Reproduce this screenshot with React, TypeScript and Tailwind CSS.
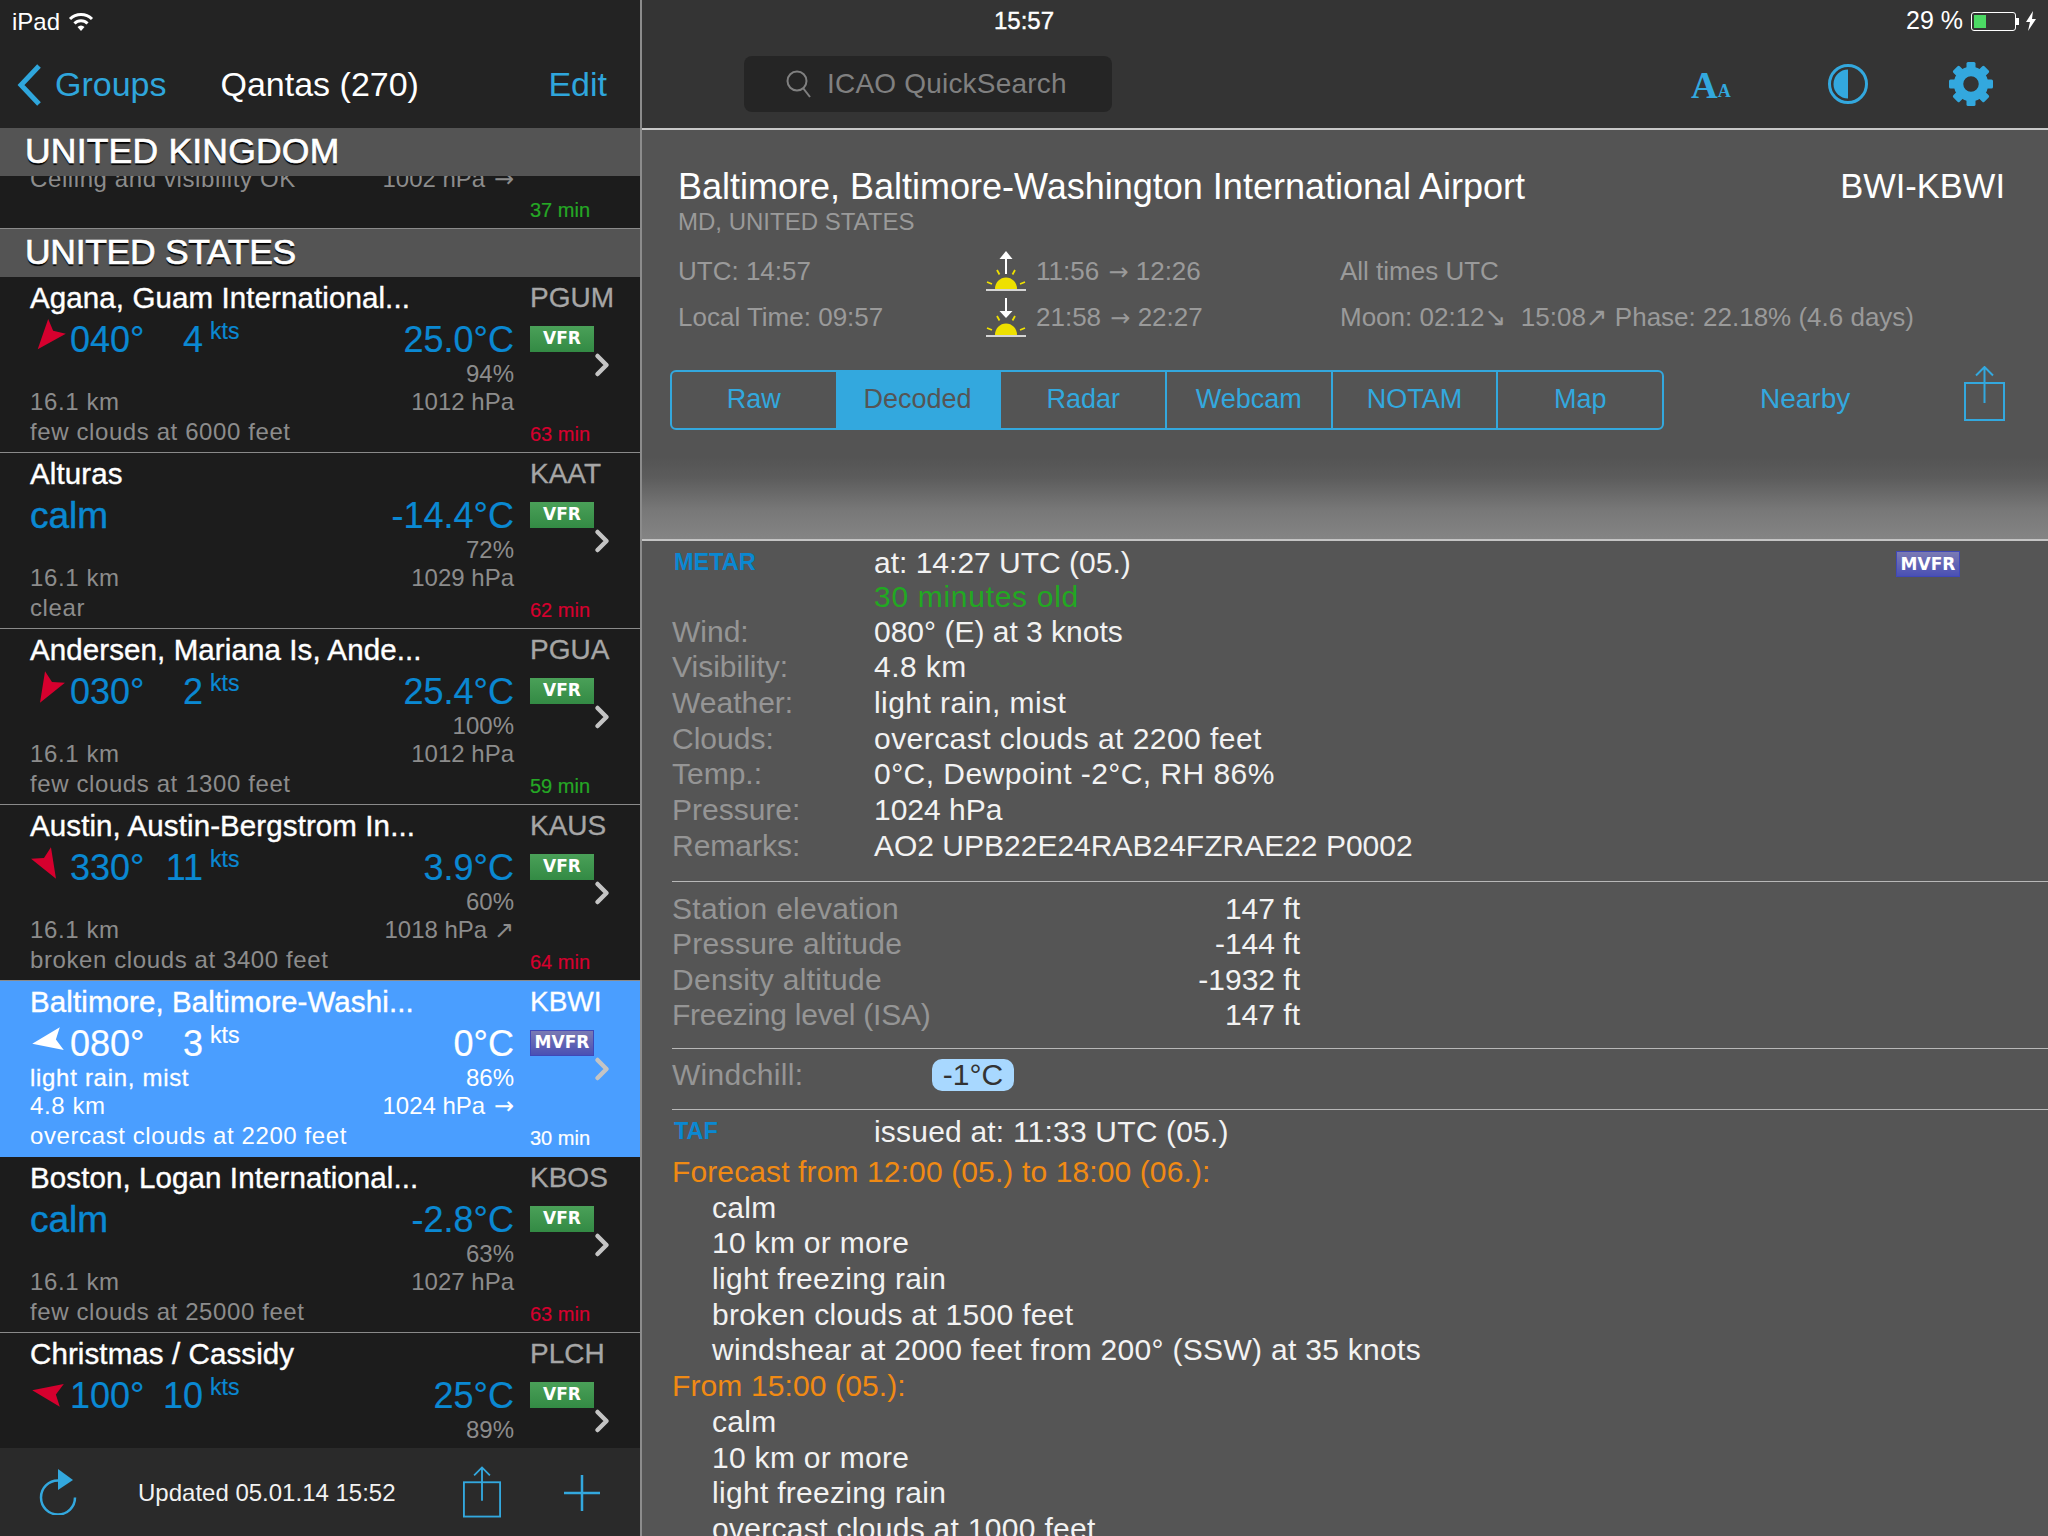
import type { ReactNode } from "react";
import { ChevronRight } from "lucide-react";

type Station = {
  name: string;
  code: string;
  dir?: number;
  speed?: string;
  temp: string;
  rh: string;
  weather?: string;
  vis: string;
  hpa: string;
  clouds: string;
  age: string;
  fresh?: boolean;
  flight?: string;
  selected?: boolean;
};

const stations: Station[] = [
  { name: "Agana, Guam International...", code: "PGUM", dir: 40, speed: "4", temp: "25.0°C", rh: "94%", vis: "16.1 km", hpa: "1012 hPa", clouds: "few clouds at 6000 feet", age: "63 min" },
  { name: "Alturas", code: "KAAT", temp: "-14.4°C", rh: "72%", vis: "16.1 km", hpa: "1029 hPa", clouds: "clear", age: "62 min" },
  { name: "Andersen, Mariana Is, Ande...", code: "PGUA", dir: 30, speed: "2", temp: "25.4°C", rh: "100%", vis: "16.1 km", hpa: "1012 hPa", clouds: "few clouds at 1300 feet", age: "59 min", fresh: true },
  { name: "Austin, Austin-Bergstrom In...", code: "KAUS", dir: 330, speed: "11", temp: "3.9°C", rh: "60%", vis: "16.1 km", hpa: "1018 hPa ↗", clouds: "broken clouds at 3400 feet", age: "64 min" },
  { name: "Baltimore, Baltimore-Washi...", code: "KBWI", dir: 80, speed: "3", temp: "0°C", rh: "86%", weather: "light rain, mist", vis: "4.8 km", hpa: "1024 hPa →", clouds: "overcast clouds at 2200 feet", age: "30 min", flight: "MVFR", selected: true },
  { name: "Boston, Logan International...", code: "KBOS", temp: "-2.8°C", rh: "63%", vis: "16.1 km", hpa: "1027 hPa", clouds: "few clouds at 25000 feet", age: "63 min" },
  { name: "Christmas / Cassidy", code: "PLCH", dir: 100, speed: "10", temp: "25°C", rh: "89%", vis: "", hpa: "", clouds: "", age: "" },
];

function Arrow() {
  return <span className="ml-[2px] font-['DejaVu_Sans',sans-serif] text-[24px]">→</span>;
}

function WindArrow({ dir, color }: { dir: number; color: string }) {
  return (
    <svg width="40" height="40" viewBox="-20 -20 40 40" className="shrink-0 -translate-x-[2px] -translate-y-[3px]">
      <polygon points="0,16 -11.5,-14 0,-8 11.5,-14" fill={color} transform={`rotate(${dir})`} />
    </svg>
  );
}

function FlightBadge({ kind = "VFR" }: { kind?: string }) {
  const mvfr = kind === "MVFR";
  return (
    <div
      className={`flex h-[26px] w-[64px] items-center justify-center font-['DejaVu_Sans',sans-serif] text-[17px] font-bold text-white ${
        mvfr
          ? "border border-[#3f48b8] bg-[linear-gradient(to_bottom,#7a7ab4,#4a50b4)]"
          : "bg-[linear-gradient(to_bottom,#4aa058,#338a44)]"
      }`}
    >
      {kind}
    </div>
  );
}

function ShareIcon({ className }: { className: string }) {
  return (
    <svg viewBox="0 0 41 55" fill="none" stroke="#33a8de" strokeWidth="2" className={className}>
      <rect x="1" y="17" width="39" height="37" />
      <path d="M20.5 1v36M12 9.5 20.5 1 29 9.5" />
    </svg>
  );
}

function SunIcon({ down }: { down?: boolean }) {
  return (
    <svg width="40" height="40" viewBox="0 0 40 40" className="shrink-0">
      <path d="M9 38a11 11.5 0 0 1 22 0z" fill="#eee000" />
      <path d="M0 39h40" stroke="#fff" strokeWidth="1.6" />
      <path d="M1 31l5 2M39 31l-5 2M11 19l2.500 4.500M29 19l-2.500 4.500" stroke="#eee000" strokeWidth="1.800" fill="none" />
      {down ? (
        <>
          <path d="M20 1v14" stroke="#fff" strokeWidth="2" />
          <path d="M13.500 14h13L20 21z" fill="#fff" />
        </>
      ) : (
        <>
          <path d="M20 7v16" stroke="#fff" strokeWidth="2" />
          <path d="M13.500 8h13L20 0z" fill="#fff" />
        </>
      )}
    </svg>
  );
}

function GearIcon() {
  const teeth = [0, 45, 90, 135, 180, 225, 270, 315];
  return (
    <svg width="44" height="44" viewBox="-22 -22 44 44">
      <circle r="12.500" fill="none" stroke="#33a8de" strokeWidth="9.500" />
      {teeth.map((a) => (
        <rect key={a} x="-4.500" y="-22" width="9" height="8" rx="1.500" fill="#33a8de" transform={`rotate(${a})`} />
      ))}
    </svg>
  );
}

function StationRow({ s }: { s: Station }) {
  const sel = s.selected;
  const sub = sel ? "text-white" : "text-[#8c8c8c]";
  const data = sel ? "text-white" : "text-[#0a88d2]";
  const ageColor = sel ? "text-white" : s.fresh ? "text-[#25a825]" : "text-[#d6002e]";
  const hasArrow = s.hpa.endsWith("→");
  return (
    <div className={`flex h-[176px] shrink-0 border-b pl-[30px] ${sel ? "border-transparent bg-[#4a9eff]" : "border-[#8a8a8a] bg-[#1c1c1c]"}`}>
      <div className="flex w-[484px] shrink-0 flex-col">
        <div className="flex h-[43px] items-center text-[29.5px] tracking-[0.1px] text-white [-webkit-text-stroke:0.4px_white]">{s.name}</div>
        <div className={`flex h-[40px] items-center text-[36px] [-webkit-text-stroke:0.2px_currentColor] ${data}`}>
          {s.dir !== undefined ? (
            <>
              <WindArrow dir={s.dir} color={sel ? "#ffffff" : "#d6002e"} />
              <span className="w-[74px]">{String(s.dir).padStart(3, "0")}°</span>
              <span className="w-[59px] text-right">{s.speed}</span>
              <span className="ml-[7px] -translate-y-[9px] text-[23px] leading-none">kts</span>
            </>
          ) : (
            <span className="text-[37px] [-webkit-text-stroke:0.5px_currentColor]">calm</span>
          )}
          <span className="ml-auto">{s.temp}</span>
        </div>
        <div className={`flex h-[27px] items-center justify-between text-[24px] ${sub}`}>
          <span className="tracking-[0.7px] text-white [-webkit-text-stroke:0.3px_white]">{s.weather}</span>
          <span>{s.rh}</span>
        </div>
        <div className={`flex h-[30px] items-center justify-between text-[24px] ${sub}`}>
          <span className="tracking-[0.6px]">{s.vis}</span>
          <span>
            {hasArrow ? s.hpa.slice(0, -1) : s.hpa}
            {hasArrow && <Arrow />}
          </span>
        </div>
        <div className={`flex h-[30px] items-center text-[24px] tracking-[0.6px] ${sub}`}>{s.clouds}</div>
      </div>
      <div className="ml-[16px] flex flex-1 flex-col">
        <div className={`flex h-[42px] items-center text-[28px] [-webkit-text-stroke:0.3px_currentColor] ${sel ? "text-white" : "text-[#a6a6a6]"}`}>{s.code}</div>
        <div className="mt-[7px]">
          <FlightBadge kind={s.flight} />
        </div>
        <ChevronRight size={36} strokeWidth={3} className="ml-[54px] mt-[-5px] text-[#c4c4c4]" />
        <div className={`mt-auto flex h-[36px] items-center text-[20px] [-webkit-text-stroke:0.2px_currentColor] ${ageColor}`}>{s.age}</div>
      </div>
    </div>
  );
}

function SectionHeader({ children, className }: { children: ReactNode; className: string }) {
  return (
    <div className={`flex h-[48px] shrink-0 items-center bg-[#545454] pl-[25px] text-[35.5px] text-white [-webkit-text-stroke:0.7px_white] [text-shadow:0_2px_1px_#000] ${className}`}>
      {children}
    </div>
  );
}

function InfoRow({ left, down, times, right }: { left: string; down?: boolean; times: [string, string]; right: string }) {
  return (
    <div className="flex h-[46px] items-center text-[26px] text-[#9a9a9a]">
      <span className="w-[308px]">{left}</span>
      <SunIcon down={down} />
      <span className="ml-[10px] w-[304px] whitespace-pre">
        {times[0]} <Arrow /> {times[1]}
      </span>
      <span className="whitespace-pre">{right}</span>
    </div>
  );
}

function MetarRow({ label, value, wide, first }: { label: string; value: string; wide?: boolean; first?: boolean }) {
  return (
    <div className={`flex items-center ${first ? "h-[34.500px]" : "h-[35.800px]"}`}>
      <span className="w-[202px] text-[#959595]">{label}</span>
      <span className={wide ? "tracking-[0.45px]" : ""}>{value}</span>
    </div>
  );
}

function AltRow({ label, value, tight }: { label: string; value: string; tight?: boolean }) {
  return (
    <div className="flex h-[35.600px] w-[628px] items-center justify-between">
      <span className={`text-[#959595] ${tight ? "tracking-[-0.25px]" : "tracking-[0.3px]"}`}>{label}</span>
      <span>{value}</span>
    </div>
  );
}

export default function App() {
  const tabs = ["Raw", "Decoded", "Radar", "Webcam", "NOTAM", "Map"];
  const alts = [
    ["Station elevation", "147 ft"],
    ["Pressure altitude", "-144 ft"],
    ["Density altitude", "-1932 ft"],
    ["Freezing level (ISA)", "147 ft"],
  ];
  const taf: [string, boolean][] = [
    ["Forecast from 12:00 (05.) to 18:00 (06.):", true],
    ["calm", false],
    ["10 km or more", false],
    ["light freezing rain", false],
    ["broken clouds at 1500 feet", false],
    ["windshear at 2000 feet from 200° (SSW) at 35 knots", false],
    ["From 15:00 (05.):", true],
    ["calm", false],
    ["10 km or more", false],
    ["light freezing rain", false],
    ["overcast clouds at 1000 feet", false],
  ];

  return (
    <div className="flex h-[1536px] w-[2048px] overflow-hidden bg-[#555555] font-['Liberation_Sans','DejaVu_Sans',sans-serif]">
      {/* station list */}
      <div className="flex h-full w-[640px] shrink-0 flex-col bg-[#1c1c1c]">
        <div className="h-[128px] shrink-0 bg-[#232323]">
          <div className="flex h-[43px] items-center pl-[12px] text-[24px] text-white">
            iPad
            <svg width="26" height="22" viewBox="0 0 26 22" className="ml-[8px]" fill="none" stroke="#fff" strokeWidth="3">
              <path d="M2 8a15.500 15.500 0 0 1 22 0M6.500 12.500a9 9 0 0 1 13 0" />
              <path d="M9.500 16a4.800 4.800 0 0 1 7 0L13 20z" fill="#fff" stroke="none" />
            </svg>
          </div>
          <div className="flex h-[85px] items-center pb-[2px] text-[34px]">
            <svg width="26" height="44" viewBox="0 0 26 44" fill="none" stroke="#2fa6dc" strokeWidth="5" className="ml-[16px]">
              <path d="M23 3 5 22l18 19" />
            </svg>
            <span className="ml-[13px] text-[#2fa6dc]">Groups</span>
            <span className="ml-[54px] text-white">Qantas (270)</span>
            <span className="ml-auto mr-[33px] text-[#2fa6dc]">Edit</span>
          </div>
        </div>
        <div className="flex min-h-0 flex-1 flex-col overflow-hidden">
          <SectionHeader className="tracking-[0.2px]">UNITED KINGDOM</SectionHeader>
          <div className="flex h-[53px] shrink-0 overflow-hidden border-b border-[#8a8a8a] pl-[30px]">
            <div className="-mt-[12px] flex h-[30px] w-[484px] shrink-0 items-center justify-between text-[24px] text-[#8c8c8c]">
              <span className="tracking-[0.6px]">Ceiling and visibility OK</span>
              <span>
                1002 hPa <Arrow />
              </span>
            </div>
            <div className="ml-[16px] pt-[24px] text-[20px] leading-[20px] text-[#25a825] [-webkit-text-stroke:0.2px_currentColor]">37 min</div>
          </div>
          <SectionHeader className="tracking-[-0.3px]">UNITED STATES</SectionHeader>
          {stations.map((s) => (
            <StationRow key={s.code} s={s} />
          ))}
        </div>
        <div className="flex h-[88px] shrink-0 items-center bg-[#2a2a2a]">
          <svg width="38" height="46" viewBox="0 0 38 46" fill="none" className="ml-[39px]">
            <path d="M19 11.500a17 17 0 1 0 17 17" stroke="#33a8de" strokeWidth="2.500" />
            <path d="M19 0l15 11-15 10z" fill="#33a8de" />
          </svg>
          <span className="ml-[61px] pt-[2px] text-[24px] text-[#f2f2f2]">Updated 05.01.14 15:52</span>
          <ShareIcon className="ml-[67px] h-[52px] w-[38px]" />
          <svg width="36" height="36" viewBox="0 0 36 36" stroke="#33a8de" strokeWidth="2.500" className="ml-[63px] mt-[2px]">
            <path d="M0 18h36M18 0v36" />
          </svg>
        </div>
      </div>
      <div className="h-full w-[2px] shrink-0 bg-[#8c8c8c]" />

      {/* station detail */}
      <div className="flex h-full min-w-0 flex-1 flex-col">
        <div className="h-[130px] shrink-0 border-b-2 border-[#c8c8c8] bg-[#343434]">
          <div className="flex h-[42px] items-center text-white">
            <span className="ml-[352px] text-[24px] [-webkit-text-stroke:0.4px_white]">15:57</span>
            <span className="ml-auto text-[25px]">29 %</span>
            <div className="ml-[8px] flex items-center">
              <div className="h-[19px] w-[45px] rounded-[3px] border border-white p-[2px]">
                <div className="h-full w-[12px] bg-[#4cd964]" />
              </div>
              <div className="h-[7px] w-[3px] bg-white" />
            </div>
            <svg width="12" height="20" viewBox="0 0 12 20" className="ml-[6px] mr-[11px]" fill="#fff">
              <path d="M8 0 1 11h4l-2 9 8-12H7z" />
            </svg>
          </div>
          <div className="flex h-[86px] items-start">
            <div className="ml-[102px] mt-[14px] flex h-[56px] w-[368px] items-center rounded-[8px] bg-[#252525] text-[28px] tracking-[0.2px] text-[#808080]">
              <svg width="26" height="28" viewBox="0 0 26 28" fill="none" stroke="#808080" strokeWidth="2" className="ml-[42px]">
                <circle cx="11" cy="11" r="9.500" />
                <path d="M17 18l7 9" />
              </svg>
              <span className="ml-[15px]">ICAO QuickSearch</span>
            </div>
            <div className="ml-[579px] mt-[24px] flex h-[36px] items-end font-['Liberation_Serif',serif] font-bold leading-none text-[#33a8de]">
              <span className="text-[37px] leading-[32px]">A</span>
              <span className="text-[18px] leading-[22px]">A</span>
            </div>
            <svg width="42" height="42" viewBox="0 0 42 42" className="ml-[96px] mt-[21px]">
              <circle cx="21" cy="21" r="18.500" fill="none" stroke="#33a8de" strokeWidth="3" />
              <path d="M21 6.500a14.500 14.500 0 0 0 0 29z" fill="#33a8de" />
            </svg>
            <div className="ml-[80px] mt-[20px]">
              <GearIcon />
            </div>
          </div>
        </div>

        <div className="h-[411px] shrink-0 border-b-2 border-[#c4c4c4] bg-[linear-gradient(to_bottom,#545454_80%,#5c5c5c_85%,#787878_93%,#848484_100%)]">
          <div className="mt-[35px] flex h-[44px] items-center justify-between pl-[36px] pr-[43px] text-[36px] text-white">
            <span>Baltimore, Baltimore-Washington International Airport</span>
            <span className="text-[34.5px]">BWI-KBWI</span>
          </div>
          <div className="flex h-[26px] items-center pl-[36px] text-[24px] text-[#9a9a9a]">MD, UNITED STATES</div>
          <div className="mt-[13px] pl-[36px]">
            <InfoRow left="UTC: 14:57" times={["11:56", "12:26"]} right="All times UTC" />
            <InfoRow left="Local Time: 09:57" down times={["21:58", "22:27"]} right="Moon: 02:12↘  15:08↗ Phase: 22.18% (4.6 days)" />
          </div>
          <div className="ml-[28px] mt-[30px] flex items-center">
            <div className="flex h-[60px] w-[994px] overflow-hidden rounded-[6px] border-2 border-[#33a8de]">
              {tabs.map((t, i) => (
                <div
                  key={t}
                  className={`flex flex-1 items-center justify-center pb-[2px] text-[27px] ${
                    t === "Decoded" ? "bg-[#33a8de] text-[#555555]" : "text-[#33a8de]"
                  } ${i > 1 ? "border-l-2 border-[#33a8de]" : ""}`}
                >
                  {t}
                </div>
              ))}
            </div>
            <span className="ml-[96px] pb-[2px] text-[28px] text-[#33a8de]">Nearby</span>
            <ShareIcon className="ml-[114px] mt-[-13px] h-[55px] w-[41px]" />
          </div>
        </div>

        <div className="min-h-0 flex-1 overflow-hidden pl-[30px] pt-[4px] text-[30px] text-[#f2f2f2]">
          <div className="flex h-[34.500px] items-center">
            <span className="w-[202px] pl-[2px] text-[23.5px] font-bold text-[#0a88d2]">METAR</span>
            <span>at: 14:27 UTC (05.)</span>
            <div className="ml-auto mr-[88px] mt-[4px]">
              <FlightBadge kind="MVFR" />
            </div>
          </div>
          <div className="flex h-[34.500px] items-center pl-[202px] tracking-[0.7px] text-[#22a822]">30 minutes old</div>
          <MetarRow first label="Wind:" value="080° (E) at 3 knots" />
          <MetarRow label="Visibility:" value="4.8 km" wide />
          <MetarRow label="Weather:" value="light rain, mist" wide />
          <MetarRow label="Clouds:" value="overcast clouds at 2200 feet" wide />
          <MetarRow label="Temp.:" value="0°C, Dewpoint -2°C, RH 86%" wide />
          <MetarRow label="Pressure:" value="1024 hPa" />
          <MetarRow label="Remarks:" value="AO2 UPB22E24RAB24FZRAE22 P0002" />
          <div className="mt-[18px] h-[1px] bg-[#b8b8b8]" />
          <div className="mt-[8px]">
            {alts.map(([l, v]) => (
              <AltRow key={l} label={l} value={v} tight={l.startsWith("Freezing")} />
            ))}
          </div>
          <div className="mt-[15px] h-[1px] bg-[#b8b8b8]" />
          <div className="mt-[8px] flex h-[36px] items-center">
            <span className="w-[260px] tracking-[0.3px] text-[#959595]">Windchill:</span>
            <span className="flex h-[32px] w-[82px] items-center justify-center rounded-[10px] bg-[#a8d8ff] text-[#333333]">-1°C</span>
          </div>
          <div className="mt-[16px] h-[1px] bg-[#b8b8b8]" />
          <div className="mt-[4px] flex h-[36px] items-center">
            <span className="w-[202px] pl-[2px] text-[23.5px] font-bold text-[#0a88d2]">TAF</span>
            <span className="tracking-[0.2px]">issued at: 11:33 UTC (05.)</span>
          </div>
          <div className="mt-[4px]">
            {taf.map(([t, head], i) => (
              <div key={i} className={`flex h-[35.700px] items-center ${head ? "tracking-[0.12px] text-[#f08a14]" : "pl-[40px] tracking-[0.3px]"}`}>
                {t}
              </div>
            ))}
          </div>
        </div>
      </div>
    </div>
  );
}
